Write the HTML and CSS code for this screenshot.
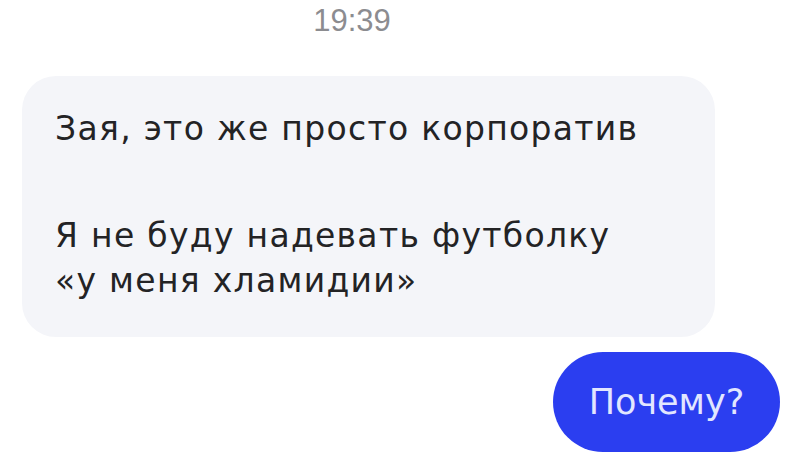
FILE: index.html
```html
<!DOCTYPE html>
<html lang="ru">
<head>
    <meta charset="UTF-8">
    <meta name="viewport" content="width=device-width, initial-scale=1.0">
    <title>Чат</title>
    <link rel="stylesheet" href="styles.css">
</head>
<body>

<div class="chat">
    <div class="time">19:39</div>

    <div class="bubble incoming">
        <p>Зая, это же просто корпоратив</p>
        <p>Я не буду надевать футболку<br>«у меня хламидии»</p>
    </div>

    <div class="bubble outgoing">Почему?</div>
</div>

</body>
</html>
```

FILE: styles.css
```css
body {
    font-family: 'DejaVu Sans', 'Liberation Sans', sans-serif;
    background: #fff;
    margin: 0;
    padding: 0;
    color: #232325;
}
.chat {
    display: flex;
    flex-direction: column;
    padding: 0 20px 0 22px;
}
.time {
    height: 44px;
    padding-right: 98px;
    font-family: 'Liberation Sans', Arial, sans-serif;
    font-size: 31px;
    line-height: 42px;
    text-align: center;
    color: #8c8c90;
}
.bubble {
    border-radius: 34px;
}
.incoming {
    margin-top: 32px;
    width: 693px;
    box-sizing: border-box;
    padding: 30px 30px 34px 33px;
    background: #f4f5f9;
}
.incoming p {
    margin: 0;
    font-size: 33px;
    line-height: 45px;
    letter-spacing: 1.3px;
}
.incoming p + p {
    margin-top: 62px;
}
.outgoing {
    align-self: flex-end;
    margin-top: 15px;
    width: 227px;
    height: 100px;
    border-radius: 50px;
    background: #2b3ef0;
    color: #e2e6ff;
    font-size: 35px;
    display: flex;
    align-items: center;
    justify-content: center;
}
```
